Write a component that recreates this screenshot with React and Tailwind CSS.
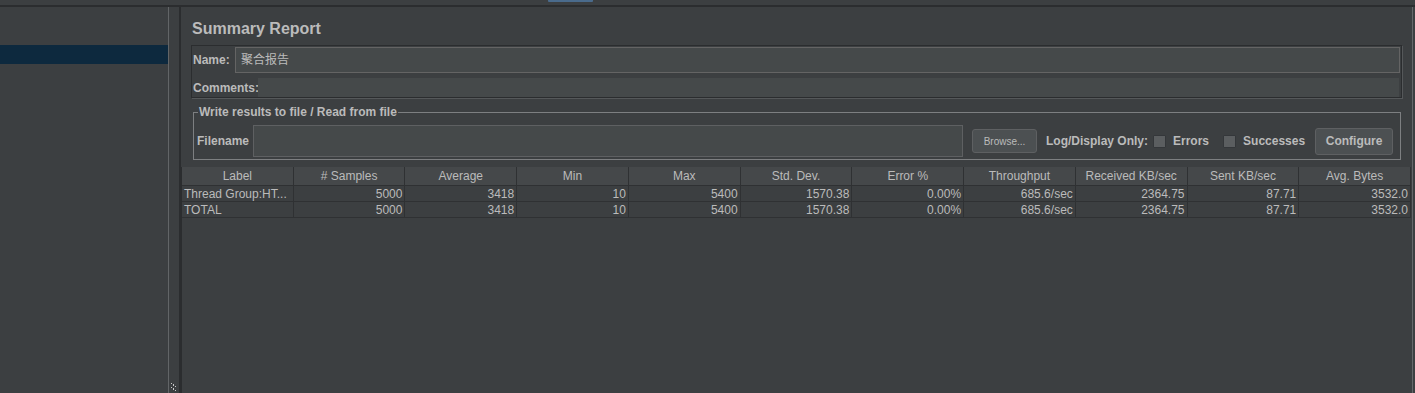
const columns = ['Label', '# Samples', 'Average', 'Min', 'Max', 'Std. Dev.', 'Error %', 'Throughput', 'Received KB/sec', 'Sent KB/sec', 'Avg. Bytes'];

const rows = [
  ['Thread Group:HT...', '5000', '3418', '10', '5400', '1570.38', '0.00%', '685.6/sec', '2364.75', '87.71', '3532.0'],
  ['TOTAL', '5000', '3418', '10', '5400', '1570.38', '0.00%', '685.6/sec', '2364.75', '87.71', '3532.0'],
];

const Checkbox = () => (
  <span className="w-[13px] h-[13px] bg-[#5b5e60] border border-[#34373a] rounded-[1px] shrink-0" />
);

const SplitDots = () => (
  <svg width="6" height="9" viewBox="0 0 6 9" className="block">
    {[0, 2, 4, 6].map((y) => (
      <g key={y}>
        <rect x={y % 4 === 0 ? 0 : 2} y={y} width="1" height="1" fill="#c8c8c8" />
        <rect x={y % 4 === 0 ? 2 : 4} y={y + 1} width="1" height="1" fill="#c8c8c8" />
      </g>
    ))}
  </svg>
);

const App = () => {
  return (
    <div className="w-[1415px] h-[393px] overflow-hidden bg-[#3c3f41] text-[#bbbbbb] flex flex-col font-['Liberation_Sans','Noto_Sans_CJK_SC',sans-serif] text-[12px]">
      {/* top tab strip */}
      <div className="h-[5px] shrink-0 flex">
        <div className="ml-[548px] w-[45px] h-[2px] bg-[#4a6b8c] rounded-b-[1px]" />
      </div>
      <div className="h-[2px] shrink-0 bg-[#2b2d2f]" />

      <div className="flex-1 flex min-h-0">
        {/* tree panel */}
        <div className="w-[169px] shrink-0 border-r border-[#626567]">
          <div className="mt-[38px] h-[19px] bg-[#0d293e]" />
        </div>

        {/* splitter */}
        <div className="w-[10px] shrink-0 flex flex-col justify-end items-center pb-[1px]">
          <SplitDots />
        </div>

        {/* right panel */}
        <div className="w-[1234px] shrink-0 border-l-2 border-[#2b2d2f] border-r border-r-[#65686a] flex flex-col">
          <div className="pt-[12px] pl-[11px] h-[31px]">
            <h1 className="text-[16px] leading-[20px] font-bold">Summary Report</h1>
          </div>

          {/* name / comments */}
          <div className="mt-[7px] ml-[10px] w-[1211px] border border-[#2b2d2f] shadow-[1px_1px_0_#55585a] flex flex-col">
            <div className="flex items-center h-[27px] pt-[1px]">
              <span className="pl-[1px] w-[43px] font-bold">Name:</span>
              <div className="flex-1 h-[26px] mr-[1px] bg-[#45494a] border border-[#646464] flex items-center pl-[5px] text-[12px]">
                聚合报告
              </div>
            </div>
            <div className="h-[5px]" />
            <div className="flex items-center h-[19px]">
              <span className="pl-[1px] w-[66px] font-bold">Comments:</span>
              <div className="flex-1 h-[19px] mr-[2px] bg-[#45494a]" />
            </div>
          </div>

          {/* write results fieldset */}
          <fieldset className="mt-[7px] ml-[12px] w-[1208px] border border-[#7d7f81] pl-[2px] pr-[5px] pb-[2px]">
            <legend className="ml-[2px] px-[1px] font-bold leading-[14px]">Write results to file / Read from file</legend>
            <div className="mt-[6px] flex items-center h-[32px] whitespace-nowrap">
              <span className="w-[57px] shrink-0 font-bold pl-[1px]">Filename</span>
              <div className="w-[710px] shrink-0 h-[32px] bg-[#45494a] border border-[#5e6062]" />
              <button className="ml-[9px] shrink-0 w-[65px] h-[24px] bg-[#4c5052] border border-[#5e6062] rounded-[3px] text-[10px] text-[#bbbbbb]">
                Browse...
              </button>
              <span className="ml-[9px] shrink-0 font-bold">Log/Display Only:</span>
              <span className="ml-[5px] shrink-0 flex items-center"><Checkbox /></span>
              <span className="ml-[7px] shrink-0 font-bold">Errors</span>
              <span className="ml-[14px] shrink-0 flex items-center"><Checkbox /></span>
              <span className="ml-[7px] shrink-0 font-bold">Successes</span>
              <button className="ml-[10px] shrink-0 w-[78px] h-[27px] bg-[#4c5052] border border-[#5e6062] rounded-[3px] font-bold text-[#bbbbbb]">
                Configure
              </button>
            </div>
          </fieldset>

          {/* results table */}
          <div className="mt-[7px] w-[1230px] flex-1 border-l border-[#2b2d2f] flex flex-col">
            <div className="grid grid-cols-11 h-[19px] bg-[#45484a] border-b border-[#2f3133]">
              {columns.map((c) => (
                <div key={c} className="border-r border-[#2f3133] flex items-center justify-center leading-[14px]">
                  {c}
                </div>
              ))}
            </div>
            {rows.map((r, i) => (
              <div key={i} className="grid grid-cols-11 h-[16px] border-b border-[#2f3133]">
                {r.map((v, j) => (
                  <div
                    key={j}
                    className={`border-r border-[#2f3133] flex items-center leading-[14px] whitespace-nowrap overflow-hidden ${j === 0 ? 'justify-start pl-[2px]' : 'justify-end pr-[2px]'}`}
                  >
                    {v}
                  </div>
                ))}
              </div>
            ))}
          </div>
        </div>
      </div>
    </div>
  );
};

export default App;
